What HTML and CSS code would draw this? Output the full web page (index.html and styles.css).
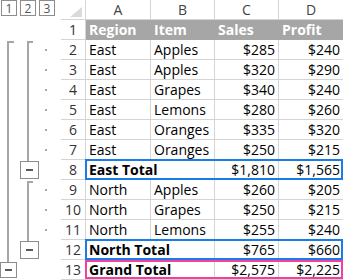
FILE: index.html
```html
<!DOCTYPE html>
<html lang="en">
<head>
    <meta charset="UTF-8">
    <title>Outline - Subtotals</title>
    <link rel="stylesheet" href="styles.css">
</head>
<body>

<div class="sheet">
    <!-- Outline gutter: level buttons, group brackets and collapse buttons -->
    <svg class="outline" width="61" height="280" viewBox="0 0 61 280">
        <g class="level">
            <rect x="1.5" y="0.5" width="15" height="15"/>
            <text x="9" y="12.5">1</text>
            <rect x="20.5" y="0.5" width="15" height="15"/>
            <text x="28" y="12.5">2</text>
            <rect x="39.5" y="0.5" width="15" height="15"/>
            <text x="47" y="12.5">3</text>
        </g>
        <g class="bracket">
            <path d="M14 42 H8 V262"/>
            <path d="M33 42 H28 V161"/>
            <path d="M33 182 H28 V241"/>
        </g>
        <g class="dots">
            <rect x="45" y="49" width="2" height="2"/>
            <rect x="45" y="69" width="2" height="2"/>
            <rect x="45" y="89" width="2" height="2"/>
            <rect x="45" y="109" width="2" height="2"/>
            <rect x="45" y="129" width="2" height="2"/>
            <rect x="45" y="149" width="2" height="2"/>
            <rect x="45" y="189" width="2" height="2"/>
            <rect x="45" y="209" width="2" height="2"/>
            <rect x="45" y="229" width="2" height="2"/>
        </g>
        <g class="collapse">
            <rect x="20.5" y="161.5" width="18" height="17"/>
            <path d="M26 170 H33"/>
            <rect x="20.5" y="241.5" width="18" height="17"/>
            <path d="M26 250 H33"/>
            <rect x="0.5" y="262.5" width="16" height="15"/>
            <path d="M5 270 H12"/>
        </g>
    </svg>

    <div class="grid">
        <div class="row head">
            <div class="corner"><span class="tri"></span></div>
            <div class="col">A</div>
            <div class="col">B</div>
            <div class="col">C</div>
            <div class="col">D</div>
        </div>
        <div class="row title">
            <div class="num">1</div>
            <div class="cell">Region</div>
            <div class="cell">Item</div>
            <div class="cell">Sales</div>
            <div class="cell">Profit</div>
        </div>
        <div class="row">
            <div class="num">2</div>
            <div class="cell">East</div>
            <div class="cell">Apples</div>
            <div class="cell money">$285</div>
            <div class="cell money">$240</div>
        </div>
        <div class="row">
            <div class="num">3</div>
            <div class="cell">East</div>
            <div class="cell">Apples</div>
            <div class="cell money">$320</div>
            <div class="cell money">$290</div>
        </div>
        <div class="row">
            <div class="num">4</div>
            <div class="cell">East</div>
            <div class="cell">Grapes</div>
            <div class="cell money">$340</div>
            <div class="cell money">$240</div>
        </div>
        <div class="row">
            <div class="num">5</div>
            <div class="cell">East</div>
            <div class="cell">Lemons</div>
            <div class="cell money">$280</div>
            <div class="cell money">$260</div>
        </div>
        <div class="row">
            <div class="num">6</div>
            <div class="cell">East</div>
            <div class="cell">Oranges</div>
            <div class="cell money">$335</div>
            <div class="cell money">$320</div>
        </div>
        <div class="row">
            <div class="num">7</div>
            <div class="cell">East</div>
            <div class="cell">Oranges</div>
            <div class="cell money">$250</div>
            <div class="cell money">$215</div>
        </div>
        <div class="row total">
            <div class="num">8</div>
            <div class="cell label">East Total</div>
            <div class="cell money">$1,810</div>
            <div class="cell money">$1,565</div>
        </div>
        <div class="row">
            <div class="num">9</div>
            <div class="cell">North</div>
            <div class="cell">Apples</div>
            <div class="cell money">$260</div>
            <div class="cell money">$205</div>
        </div>
        <div class="row">
            <div class="num">10</div>
            <div class="cell">North</div>
            <div class="cell">Grapes</div>
            <div class="cell money">$250</div>
            <div class="cell money">$215</div>
        </div>
        <div class="row">
            <div class="num">11</div>
            <div class="cell">North</div>
            <div class="cell">Lemons</div>
            <div class="cell money">$255</div>
            <div class="cell money">$240</div>
        </div>
        <div class="row total">
            <div class="num">12</div>
            <div class="cell label">North Total</div>
            <div class="cell money">$765</div>
            <div class="cell money">$660</div>
        </div>
        <div class="row total grand">
            <div class="num">13</div>
            <div class="cell label">Grand Total</div>
            <div class="cell money">$2,575</div>
            <div class="cell money">$2,225</div>
        </div>
    </div>
</div>

</body>
</html>
```

FILE: styles.css
```css
* {
    box-sizing: border-box;
}

body {
    margin: 0;
    background: #ffffff;
    font-family: 'Open Sans', 'Noto Sans', sans-serif;
    font-size: 14px;
    color: #000000;
    overflow: hidden;
}

.sheet {
    display: flex;
    width: 343px;
    height: 280px;
}

/* outline gutter */

.outline {
    flex: 0 0 61px;
    display: block;
}

.level rect {
    fill: #ffffff;
    stroke: #8c8c8c;
    stroke-width: 1;
}

.level text {
    font-family: 'Open Sans', sans-serif;
    font-size: 12px;
    fill: #555555;
    text-anchor: middle;
}

.bracket path {
    fill: none;
    stroke: #a6a6a6;
    stroke-width: 2;
}

.dots rect {
    fill: #a6a6a6;
}

.collapse rect {
    fill: #ffffff;
    stroke: #8c8c8c;
    stroke-width: 1;
}

.collapse path {
    stroke: #595959;
    stroke-width: 2;
}

/* worksheet grid */

.grid {
    flex: 0 0 282px;
    display: flex;
    flex-direction: column;
}

.row {
    position: relative;
    display: grid;
    grid-template-columns: 25px 65px 64px 64px 64px;
    height: 20px;
    line-height: 19px;
}

.row > div {
    border-right: 1px solid #d4d4d4;
    border-bottom: 1px solid #d4d4d4;
    white-space: nowrap;
    overflow: hidden;
}

.row > div:last-child {
    border-right: none;
}

.corner {
    display: flex;
    align-items: flex-end;
    justify-content: flex-end;
    padding: 0 3px 2px 0;
}

.tri {
    width: 0;
    height: 0;
    border-left: 12px solid transparent;
    border-bottom: 10px solid #dadada;
}

.col {
    text-align: center;
    color: #444444;
}

.num {
    text-align: center;
    color: #333333;
}

.cell {
    padding: 0 3px;
}

.money {
    text-align: right;
}

.title .cell {
    background: #a6a6a6;
    border-color: #a6a6a6;
    color: #ffffff;
    font-weight: bold;
}

/* total label spills over the empty Item cell */
.total .label {
    grid-column: span 2;
    font-weight: bold;
}

.total::after {
    content: "";
    position: absolute;
    left: 24px;
    right: 0;
    top: -1px;
    bottom: 0;
    border: 2px solid #1a7ce6;
    pointer-events: none;
}

.grand::after {
    top: 0;
    bottom: 1px;
    border-color: #f43f9f;
}
```
